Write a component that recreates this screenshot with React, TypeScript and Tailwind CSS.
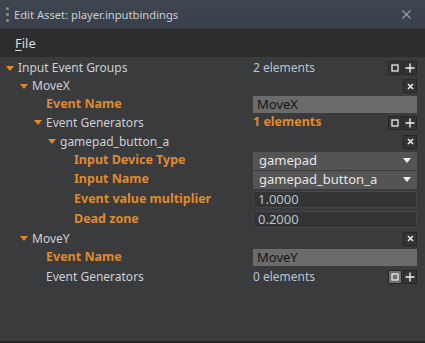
import React from "react";

const ORANGE = "text-[#e08a2e] font-bold text-[12.5px]";

const Arrow = () => (
  <svg width="8" height="5" viewBox="0 0 8 5" className="shrink-0">
    <path d="M0 0 H8 L4 5 Z" fill="#e08a2e" />
  </svg>
);

const SquareIcon = () => (
  <svg width="8" height="8" viewBox="0 0 8 8">
    <rect x="1" y="1" width="6" height="6" fill="none" stroke="#e8e8e8" strokeWidth="1.3" />
  </svg>
);

const PlusIcon = () => (
  <svg width="10" height="10" viewBox="0 0 10 10">
    <path d="M5 0.5 V9.5 M0.5 5 H9.5" stroke="#f0f0f0" strokeWidth="1.4" />
  </svg>
);

const XIcon = () => (
  <svg width="7" height="7" viewBox="0 0 7 7">
    <path d="M1 1 L6 6 M6 1 L1 6" stroke="#e8e8e8" strokeWidth="1.6" />
  </svg>
);

const Btn = ({ children, hot }: { children: React.ReactNode; hot?: boolean }) => (
  <div
    className={`w-[14px] h-[14px] flex items-center justify-center border border-[#262626] ${
      hot ? "bg-[#6e6e6e]" : "bg-[#343434]"
    }`}
  >
    {children}
  </div>
);

const AddRemove = ({ hot }: { hot?: boolean }) => (
  <div className="ml-auto mr-[8px] flex gap-[1px]">
    <Btn hot={hot}>
      <SquareIcon />
    </Btn>
    <Btn>
      <PlusIcon />
    </Btn>
  </div>
);

const Remove = () => (
  <div className="ml-auto mr-[8px]">
    <Btn>
      <XIcon />
    </Btn>
  </div>
);

interface RowProps {
  h: string;
  indent: string;
  arrow?: boolean;
  label: string;
  bold?: boolean;
  children?: React.ReactNode;
}

const Row = ({ h, indent, arrow, label, bold, children }: RowProps) => (
  <div className={`flex items-center ${h}`}>
    <div className={`flex items-center gap-[4px] w-[253px] shrink-0 ${indent}`}>
      {arrow && <Arrow />}
      <span className={bold ? ORANGE : "text-[#ccd0d6]"}>{label}</span>
    </div>
    <div className="flex-1 flex items-center">{children}</div>
  </div>
);

const TextBox = ({ value }: { value: string }) => (
  <div className="w-[164px] h-[17px] bg-[#6b6b6b] text-[#161616] pl-[4px] flex items-center text-[13px]">
    {value}
  </div>
);

const Dropdown = ({ value }: { value: string }) => (
  <div className="w-[164px] h-[18px] bg-[#545454] text-[#e6e6e6] pl-[6px] pr-[6px] flex items-center justify-between text-[13px]">
    <span>{value}</span>
    <svg width="8" height="5" viewBox="0 0 8 5">
      <path d="M0 0 H8 L4 5 Z" fill="#f0f0f0" />
    </svg>
  </div>
);

const NumBox = ({ value }: { value: string }) => (
  <div className="w-[164px] h-[17px] bg-[#333436] border border-[#464749] rounded-[2px] text-[#b9c1cb] pl-[4px] flex items-center text-[13px]">
    {value}
  </div>
);

export default function App() {
  return (
    <div
      className="w-[425px] h-[343px] flex flex-col bg-[#3a3b3d] text-[12px] leading-none border-b-2 border-[#262628] overflow-hidden"
      style={{ fontFamily: '"Noto Sans", "Open Sans", sans-serif' }}
    >
      {/* Title bar */}
      <div className="h-[30px] shrink-0 flex items-center bg-gradient-to-b from-[#3e4650] to-[#39404a] border-b border-[#24272b]">
        <div className="w-[14px] flex flex-col items-center gap-[3px] pl-[1px]">
          <div className="w-[3px] h-[3px] rounded-full bg-[#8a9098]" />
          <div className="w-[3px] h-[3px] rounded-full bg-[#8a9098]" />
          <div className="w-[3px] h-[3px] rounded-full bg-[#8a9098]" />
        </div>
        <span className="text-[#c9ced4] text-[11.2px]">Edit Asset: player.inputbindings</span>
        <svg width="9" height="9" viewBox="0 0 9 9" className="ml-auto mr-[14px]">
          <path d="M0.5 0.5 L8.5 8.5 M8.5 0.5 L0.5 8.5" stroke="#9aa1a9" strokeWidth="1.1" />
        </svg>
      </div>

      {/* Menu bar */}
      <div className="h-[27px] shrink-0 flex items-center bg-[#2d2d2e] pl-[15px]">
        <span className="text-[#dcdcdc] text-[13px]">
          <span className="underline underline-offset-2">F</span>ile
        </span>
      </div>

      {/* Properties */}
      <div className="flex flex-col pt-[2px]">
        <Row h="h-[18px]" indent="pl-[6px]" arrow label="Input Event Groups">
          <span className="text-[#b9c4d0]">2 elements</span>
          <AddRemove />
        </Row>
        <Row h="h-[18px]" indent="pl-[20px]" arrow label="MoveX">
          <Remove />
        </Row>
        <Row h="h-[18px]" indent="pl-[46px]" bold label="Event Name">
          <TextBox value="MoveX" />
        </Row>
        <Row h="h-[19px]" indent="pl-[34px]" arrow label="Event Generators">
          <span className={ORANGE}>1 elements</span>
          <AddRemove />
        </Row>
        <Row h="h-[19px]" indent="pl-[48px]" arrow label="gamepad_button_a">
          <Remove />
        </Row>
        <Row h="h-[19px]" indent="pl-[74px]" bold label="Input Device Type">
          <Dropdown value="gamepad" />
        </Row>
        <Row h="h-[19px]" indent="pl-[74px]" bold label="Input Name">
          <Dropdown value="gamepad_button_a" />
        </Row>
        <Row h="h-[20px]" indent="pl-[74px]" bold label="Event value multiplier">
          <NumBox value="1.0000" />
        </Row>
        <Row h="h-[20px]" indent="pl-[74px]" bold label="Dead zone">
          <NumBox value="0.2000" />
        </Row>
        <Row h="h-[19px]" indent="pl-[20px]" arrow label="MoveY">
          <Remove />
        </Row>
        <Row h="h-[19px]" indent="pl-[46px]" bold label="Event Name">
          <TextBox value="MoveY" />
        </Row>
        <Row h="h-[19px]" indent="pl-[46px]" label="Event Generators">
          <span className="text-[#b9c4d0]">0 elements</span>
          <AddRemove hot />
        </Row>
      </div>
    </div>
  );
}
